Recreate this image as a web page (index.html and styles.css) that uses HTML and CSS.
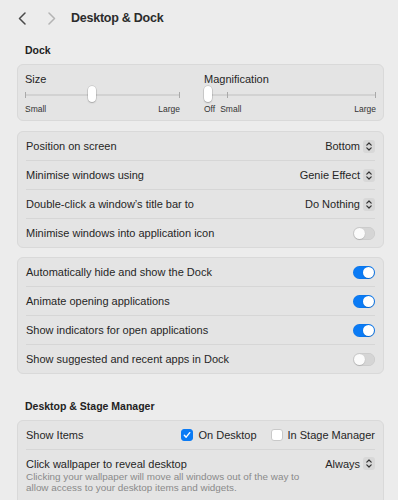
FILE: index.html
```html
<!DOCTYPE html>
<html>
<head>
<meta charset="utf-8">
<link rel="stylesheet" href="styles.css">
</head>
<body>
<div class="window">
  <header class="titlebar">
    <svg class="chev back" width="8" height="13" viewBox="0 0 8 13"><polyline points="7,1 1.5,6.5 7,12" fill="none" stroke="#4a4a4a" stroke-width="1.5" stroke-linecap="round" stroke-linejoin="round"/></svg>
    <svg class="chev fwd" width="8" height="13" viewBox="0 0 8 13"><polyline points="1,1 6.5,6.5 1,12" fill="none" stroke="#b4b4b4" stroke-width="1.5" stroke-linecap="round" stroke-linejoin="round"/></svg>
    <h1 class="title">Desktop &amp; Dock</h1>
  </header>

  <h2 class="section">Dock</h2>
  <div class="card sliders">
    <div class="slider-col">
      <div class="slabel">Size</div>
      <div class="track">
        <span class="tick" style="left:0"></span>
        <span class="tick" style="right:0"></span>
        <span class="thumb" style="left:63px"></span>
      </div>
      <div class="ends"><span>Small</span><span>Large</span></div>
    </div>
    <div class="slider-col">
      <div class="slabel">Magnification</div>
      <div class="track">
        <span class="tick" style="left:23px"></span>
        <span class="tick" style="right:0"></span>
        <span class="thumb" style="left:0"></span>
      </div>
      <div class="ends"><span class="pair"><span>Off</span><span>Small</span></span><span>Large</span></div>
    </div>
  </div>

  <div class="card">
    <div class="row"><span>Position on screen</span><span class="popup">Bottom<svg class="stepper" width="12" height="13" viewBox="0 0 12 13"><rect x="0" y="0" width="12" height="13" rx="3" fill="#d8d8d8"/><polyline points="3.8,5.2 6,3 8.2,5.2" fill="none" stroke="#333" stroke-width="1.2" stroke-linecap="round" stroke-linejoin="round"/><polyline points="3.8,7.8 6,10 8.2,7.8" fill="none" stroke="#333" stroke-width="1.2" stroke-linecap="round" stroke-linejoin="round"/></svg></span></div>
    <div class="row"><span>Minimise windows using</span><span class="popup">Genie Effect<svg class="stepper" width="12" height="13" viewBox="0 0 12 13"><rect x="0" y="0" width="12" height="13" rx="3" fill="#d8d8d8"/><polyline points="3.8,5.2 6,3 8.2,5.2" fill="none" stroke="#333" stroke-width="1.2" stroke-linecap="round" stroke-linejoin="round"/><polyline points="3.8,7.8 6,10 8.2,7.8" fill="none" stroke="#333" stroke-width="1.2" stroke-linecap="round" stroke-linejoin="round"/></svg></span></div>
    <div class="row"><span>Double-click a window’s title bar to</span><span class="popup">Do Nothing<svg class="stepper" width="12" height="13" viewBox="0 0 12 13"><rect x="0" y="0" width="12" height="13" rx="3" fill="#d8d8d8"/><polyline points="3.8,5.2 6,3 8.2,5.2" fill="none" stroke="#333" stroke-width="1.2" stroke-linecap="round" stroke-linejoin="round"/><polyline points="3.8,7.8 6,10 8.2,7.8" fill="none" stroke="#333" stroke-width="1.2" stroke-linecap="round" stroke-linejoin="round"/></svg></span></div>
    <div class="row"><span>Minimise windows into application icon</span><span class="toggle"></span></div>
  </div>

  <div class="card">
    <div class="row"><span>Automatically hide and show the Dock</span><span class="toggle on"></span></div>
    <div class="row"><span>Animate opening applications</span><span class="toggle on"></span></div>
    <div class="row"><span>Show indicators for open applications</span><span class="toggle on"></span></div>
    <div class="row"><span>Show suggested and recent apps in Dock</span><span class="toggle"></span></div>
  </div>

  <h2 class="section spaced">Desktop &amp; Stage Manager</h2>
  <div class="card">
    <div class="row"><span>Show Items</span>
      <span class="checks">
        <span class="check"><span class="box on"><svg width="12" height="12" viewBox="0 0 12 12"><polyline points="2.8,6.2 5,8.6 9.3,3.2" fill="none" stroke="#fff" stroke-width="1.7" stroke-linecap="round" stroke-linejoin="round"/></svg></span>On Desktop</span>
        <span class="check"><span class="box"></span>In Stage Manager</span>
      </span>
    </div>
    <div class="row tall">
      <div class="desc-wrap">
        <div class="rtitle">Click wallpaper to reveal desktop</div>
        <div class="desc">Clicking your wallpaper will move all windows out of the way to allow access to your desktop items and widgets.</div>
      </div>
      <span class="popup top">Always<svg class="stepper" width="12" height="13" viewBox="0 0 12 13"><rect x="0" y="0" width="12" height="13" rx="3" fill="#d8d8d8"/><polyline points="3.8,5.2 6,3 8.2,5.2" fill="none" stroke="#333" stroke-width="1.2" stroke-linecap="round" stroke-linejoin="round"/><polyline points="3.8,7.8 6,10 8.2,7.8" fill="none" stroke="#333" stroke-width="1.2" stroke-linecap="round" stroke-linejoin="round"/></svg></span>
    </div>
  </div>
</div>
</body>
</html>
```
FILE: styles.css
```css
* { box-sizing: border-box; }
html, body { margin: 0; padding: 0; }
body {
  background: #ececec;
  font-family: "Liberation Sans", Arial, sans-serif;
  color: #262626;
  font-size: 11px;
  width: 398px;
  height: 500px;
  overflow: hidden;
}
.window { padding: 0 14px 0 17px; }
.titlebar {
  height: 36px;
  display: flex;
  align-items: center;
  padding-left: 1px;
}
.chev { display: block; }
.chev.back { margin-right: 22px; }
.chev.fwd { margin-right: 15px; }
.title {
  margin: 0;
  font-size: 12.5px;
  font-weight: bold;
  letter-spacing: -0.25px;
  color: #2b2b2b;
}
.section {
  margin: 0;
  height: 28px;
  line-height: 28px;
  font-size: 10.5px;
  font-weight: bold;
  padding-left: 8px;
  color: #222;
}
.section.spaced { margin-top: 18px; }
.card {
  background: #e4e4e4;
  border: 1px solid #d9d9d9;
  border-radius: 6px;
  margin-bottom: 9px;
}
.card.sliders {
  display: grid;
  grid-template-columns: 155px 172px;
  column-gap: 24px;
  padding: 7px 7px 6px 7px;
  margin-bottom: 10px;
}
.slabel { height: 14px; line-height: 14px; font-size: 11px; }
.track {
  position: relative;
  height: 17px;
}
.track::before {
  content: "";
  position: absolute;
  left: 0; right: 0;
  top: 7.5px;
  height: 2px;
  background: #d2d2d2;
  border-radius: 1px;
}
.tick {
  position: absolute;
  top: 5.5px;
  width: 1px;
  height: 6px;
  background: #a9a9a9;
}
.thumb {
  position: absolute;
  top: 0;
  width: 8px;
  height: 16px;
  background: #fff;
  border-radius: 4px;
  box-shadow: 0 0 0 0.5px rgba(0,0,0,0.18), 0 1px 1.5px rgba(0,0,0,0.2);
}
.ends {
  display: flex;
  justify-content: space-between;
  height: 10px;
  line-height: 10px;
  font-size: 8.5px;
  margin-top: 1px;
  color: #333;
}
.pair { display: flex; gap: 5px; }
.row {
  margin: 0 8px;
  height: 28px;
  display: flex;
  align-items: center;
  justify-content: space-between;
}
.row + .row { border-top: 1px solid #d6d6d6; height: 29px; }
.popup { display: flex; align-items: center; gap: 3px; }
.popup.top { align-self: flex-start; margin-top: 7px; }
.stepper { display: block; }
.toggle {
  position: relative;
  width: 22px;
  height: 13px;
  border-radius: 7px;
  background: #d5d5d5;
  box-shadow: inset 0 0 0 0.5px rgba(0,0,0,0.08);
}
.toggle::after {
  content: "";
  position: absolute;
  top: 1px; left: 1px;
  width: 11px; height: 11px;
  border-radius: 50%;
  background: #fbfbfb;
  box-shadow: 0 0.5px 1px rgba(0,0,0,0.25);
}
.toggle.on { background: #0b7bf5; }
.toggle.on::after { left: 10px; background: #fff; }
.checks { display: flex; gap: 14px; }
.check { display: flex; align-items: center; gap: 5px; }
.box {
  width: 12px; height: 12px;
  border-radius: 3px;
  background: #fff;
  border: 1px solid #c9c9c9;
  display: flex; align-items: center; justify-content: center;
}
.box.on { background: #0b7bf5; border-color: #0b7bf5; }
.box svg { display: block; }
.row.tall { height: 60px; align-items: flex-start; }
.desc-wrap { padding-top: 7px; }
.rtitle { height: 14px; line-height: 14px; font-size: 11px; }
.desc {
  width: 285px;
  font-size: 9.9px;
  line-height: 10.5px;
  color: #8a8a8a;
  margin-top: 1px;
}
```
